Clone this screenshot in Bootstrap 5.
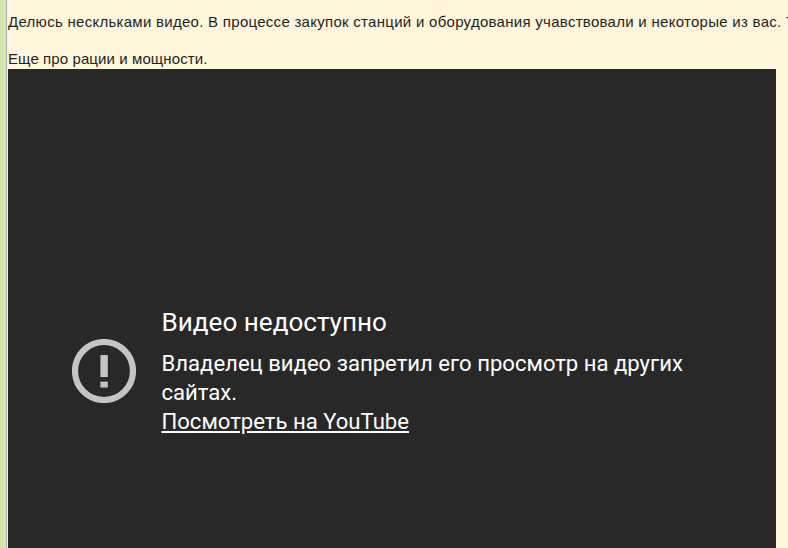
<!DOCTYPE html>
<html lang="ru">
<head>
<meta charset="utf-8">
<link href="https://cdn.jsdelivr.net/npm/bootstrap@5.3.0/dist/css/bootstrap.min.css" rel="stylesheet">
<style>
html, body { margin: 0; height: 548px; overflow: hidden; background: #fff6dc; }
.frame-shell { height: 548px; }
.side-strip { width: 6px; background: #d5e9ae; flex: none; }
.side-rule { width: 2px; flex: none; background: linear-gradient(to right, #a9afb3 50%, #f3f3ee 50%); }
.post-body { flex: 1 1 auto; min-width: 0; overflow: hidden; font-family: "Liberation Sans", Arial, sans-serif; font-size: 15px; line-height: 16px; color: #1f1f1f; }
.post-line { white-space: nowrap; margin: 0; }
.line-one { padding-top: 14px; height: 44px; letter-spacing: .28px; }
.line-two { height: 25px; padding-top: 7px; letter-spacing: .1px; }
.video-box { width: 768px; height: 600px; background: #282828; color: #fff; font-family: Roboto, "Liberation Sans", sans-serif; padding-top: 238px; }
.warn-col { width: 153.5px; flex: none; padding-left: 63.5px; padding-top: 32px; }
.warn-col svg { display: block; }
.msg-col { width: 540px; }
.msg-title { font-size: 26.1px; line-height: 30px; margin: 0 0 12px; }
.msg-text { font-size: 22.1px; line-height: 29px; margin: 0; }
.msg-text a { color: #fff; display: block; }
</style>
</head>
<body>
<div class="frame-shell d-flex">
  <div class="side-strip"></div>
  <div class="side-rule"></div>
  <div class="post-body">
    <p class="post-line line-one">Делюсь нескльками видео. В процессе закупок станций и оборудования учавствовали и некоторые из вас. Теперь можно посмотреть, что получилось.</p>
    <p class="post-line line-two">Еще про рации и мощности.</p>
    <div class="video-box d-flex">
      <div class="warn-col">
        <svg width="64" height="64" viewBox="0 0 64 64" aria-hidden="true">
          <circle cx="32" cy="32" r="29" fill="none" stroke="#c4c4c4" stroke-width="6.2"></circle>
          <rect x="28.4" y="16" width="7.4" height="22" fill="#c4c4c4"></rect>
          <rect x="28.4" y="42.6" width="7.4" height="6" fill="#c4c4c4"></rect>
        </svg>
      </div>
      <div class="msg-col">
        <p class="msg-title">Видео недоступно</p>
        <p class="msg-text">Владелец видео запретил его просмотр на других сайтах.<a href="#">Посмотреть на YouTube</a></p>
      </div>
    </div>
  </div>
</div>
</body>
</html>
